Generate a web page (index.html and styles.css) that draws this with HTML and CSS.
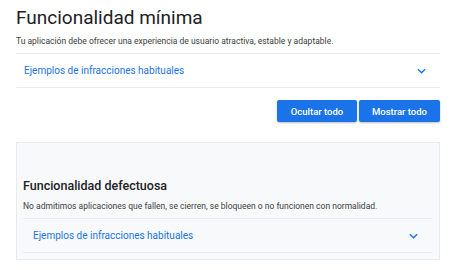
FILE: index.html
```html
<!DOCTYPE html>
<html lang="es">
<head>
    <meta charset="UTF-8">
    <title>Funcionalidad mínima</title>
    <link rel="stylesheet" href="styles.css">
</head>
<body>

<div class="page">
    <h1 class="title">Funcionalidad mínima</h1>
    <p class="lead">Tu aplicación debe ofrecer una experiencia de usuario atractiva, estable y adaptable.</p>

    <div class="expander">
        <span>Ejemplos de infracciones habituales</span>
        <svg class="chevron" viewBox="0 0 10 6" width="9" height="6"><path d="M1 1 L5 5 L9 1" fill="none" stroke="#1a73e8" stroke-width="1.6"/></svg>
    </div>

    <div class="actions">
        <button class="btn">Ocultar todo</button>
        <button class="btn">Mostrar todo</button>
    </div>

    <div class="card">
        <h2 class="card-title">Funcionalidad defectuosa</h2>
        <p class="card-text">No admitimos aplicaciones que fallen, se cierren, se bloqueen o no funcionen con normalidad.</p>
        <div class="expander inner">
            <span>Ejemplos de infracciones habituales</span>
            <svg class="chevron" viewBox="0 0 10 6" width="9" height="6"><path d="M1 1 L5 5 L9 1" fill="none" stroke="#1a73e8" stroke-width="1.6"/></svg>
        </div>
    </div>
</div>

</body>
</html>
```

FILE: styles.css
```css
body {
    margin: 0;
    background: #fff;
    font-family: Roboto, "Liberation Sans", sans-serif;
    color: #202124;
}

.page {
    padding: 4px 10px 0 16px;
}

.title {
    margin: 0;
    font-size: 19px;
    font-weight: 400;
    line-height: 28px;
    color: #202124;
}

.lead {
    margin: 2px 0 0;
    font-size: 8.5px;
    line-height: 14px;
    color: #3c4043;
}

.expander {
    display: flex;
    align-items: center;
    justify-content: space-between;
    margin-top: 5px;
    height: 33px;
    padding: 0 14px 0 8px;
    border-top: 1px solid #e8eaed;
    border-bottom: 1px solid #e8eaed;
    font-size: 10px;
    color: #1a73e8;
}

.actions {
    display: flex;
    justify-content: flex-end;
    gap: 2px;
    margin-top: 12px;
}

.btn {
    height: 22px;
    width: 80px;
    border: none;
    border-radius: 2px;
    background: #1a73e8;
    color: #fff;
    font-family: Roboto, sans-serif;
    font-size: 9.5px;
    font-weight: 500;
    box-shadow: 0 1px 2px rgba(0,0,0,0.25);
}

.btn + .btn {
    width: 81px;
}

.card {
    margin-top: 20px;
    padding: 35px 7px 6px 6px;
    background: #f8f9fa;
    border: 1px solid #e8eaed;
}

.card-title {
    margin: 0;
    font-size: 12.5px;
    font-weight: 500;
    line-height: 16px;
}

.card-text {
    margin: 5px 0 0;
    font-size: 8.5px;
    line-height: 14px;
    color: #3c4043;
}

.expander.inner {
    margin-top: 5px;
    padding: 0 14px 0 10px;
}
```
